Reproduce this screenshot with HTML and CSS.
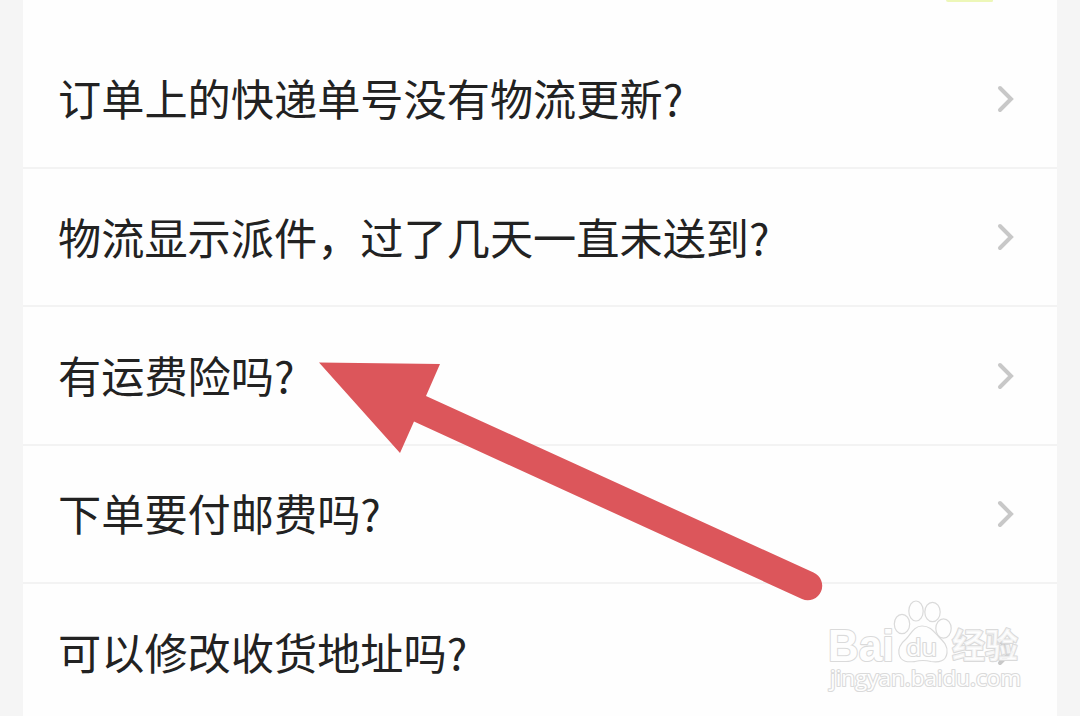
FILE: index.html
```html
<!DOCTYPE html>
<html lang="zh-CN">

<head>
  <meta charset="UTF-8">
  <meta name="viewport" content="width=device-width, initial-scale=1.0">
  <title>常见问题</title>
  <link rel="stylesheet" href="styles.css">
</head>

<body>
  <main>
    <header>
      <span class="tab-line"></span>
    </header>
    <ul class="questions">
      <li>
        <span>订单上的快递单号没有物流更新?</span>
        <svg class="chevron" viewBox="0 0 18 28"><path d="M3 3L14 14L3 25" /></svg>
      </li>
      <li>
        <span>物流显示派件，过了几天一直未送到?</span>
        <svg class="chevron" viewBox="0 0 18 28"><path d="M3 3L14 14L3 25" /></svg>
      </li>
      <li>
        <span>有运费险吗?</span>
        <svg class="chevron" viewBox="0 0 18 28"><path d="M3 3L14 14L3 25" /></svg>
      </li>
      <li>
        <span>下单要付邮费吗?</span>
        <svg class="chevron" viewBox="0 0 18 28"><path d="M3 3L14 14L3 25" /></svg>
      </li>
      <li>
        <span>可以修改收货地址吗?</span>
        <svg class="chevron" viewBox="0 0 18 28"><path d="M3 3L14 14L3 25" /></svg>
      </li>
    </ul>
  </main>

  <!-- arrow pointing at the third question -->
  <svg class="arrow" viewBox="0 0 510 250">
    <path d="M1 2.500L122 4L108 36L495.500 212.500A14 14 0 0 1 484 239L96 61.500L82 93Z" />
  </svg>

  <!-- watermark -->
  <svg class="watermark" viewBox="0 0 210 100">
    <g class="paw">
      <ellipse cx="82" cy="24" rx="7.700" ry="9.700" />
      <ellipse cx="96" cy="11" rx="7.200" ry="10" />
      <ellipse cx="112.500" cy="12" rx="7.700" ry="9.700" />
      <ellipse cx="123.500" cy="28.500" rx="7.700" ry="9.700" />
      <path d="M102 26C94 26 91 34 86 39C80 44 78 49 79 54C81 63 89 62 95 61.500C101 60 105 60 111 61.500C119 63 126 61 127 53C128 46 124 42 119 37C114 32 111 26 102 26Z" />
    </g>
    <g class="marks">
      <text class="bold" x="8" y="61" font-size="45" textLength="66" lengthAdjust="spacingAndGlyphs">Bai</text>
      <text class="du" x="86" y="56" font-size="23" textLength="31" lengthAdjust="spacingAndGlyphs">du</text>
      <text class="cjk" x="132" y="58" font-size="34" textLength="66" lengthAdjust="spacingAndGlyphs">经验</text>
      <text class="site" x="10" y="86" font-size="22" textLength="191" lengthAdjust="spacingAndGlyphs">jingyan.baidu.com</text>
    </g>
  </svg>
</body>

</html>
```
FILE: styles.css
```css
body {
  margin: 0;
  height: 716px;
  overflow: hidden;
  background-color: #f5f5f5;
  color: #222;
  font-family: "Noto Sans CJK SC", sans-serif;
}

main {
  height: 716px;
  margin: 0 23px;
  background-color: #fefefe;
  overflow: hidden;
}

header {
  display: flex;
  justify-content: flex-end;
  height: 30.600px;
  padding-right: 64px;
}

.tab-line {
  width: 47px;
  height: 2px;
  border-radius: 0 0 4px 6px;
  background-color: #edf7b8;
}

.questions {
  margin: 0;
  padding: 0;
  list-style: none;
}

.questions li {
  display: flex;
  align-items: center;
  justify-content: space-between;
  box-sizing: border-box;
  height: 138.400px;
  padding: 0 42px 0 35px;
  border-bottom: 2px solid #f3f3f3;
  font-size: 43.200px;
  line-height: 60px;
  white-space: nowrap;
}

.questions span {
  padding-bottom: 3px;
}

.chevron {
  width: 18px;
  height: 28px;
  fill: none;
  stroke: #c8c8c8;
  stroke-width: 4;
  stroke-linecap: round;
}

.arrow {
  position: absolute;
  left: 318px;
  top: 360px;
  width: 510px;
  height: 250px;
  fill: #dc565b;
}

.watermark {
  position: absolute;
  left: 820px;
  top: 600px;
  width: 210px;
  height: 100px;
}

.paw,
.marks {
  fill: #fefefe;
  stroke: #dadada;
  stroke-width: 1.200;
}

.marks text {
  paint-order: stroke;
  stroke-width: 2.200;
  stroke-linejoin: round;
}

.bold {
  font-family: "Liberation Sans", sans-serif;
  font-weight: bold;
}

.du,
.site {
  font-family: "Open Sans", sans-serif;
}

.marks .cjk {
  fill-opacity: 0.75;
  font-family: "Noto Sans CJK SC", sans-serif;
  font-weight: bold;
}
```
